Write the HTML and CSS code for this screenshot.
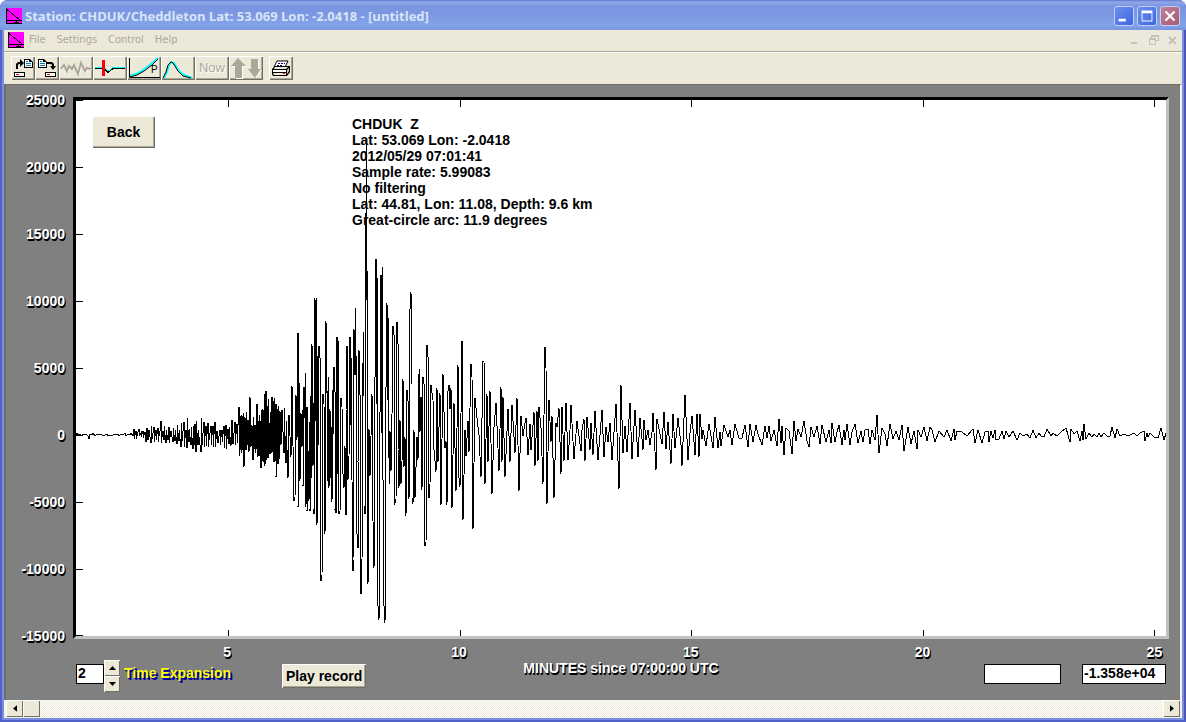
FILE: index.html
```html
<!DOCTYPE html>
<html lang="en">
<head>
    <meta charset="UTF-8">
    <title>Station: CHDUK/Cheddleton</title>
    <link rel="stylesheet" href="styles.css">
</head>
<body>
<!-- app icon, used in title bar and menu bar -->
<svg class="defs" width="0" height="0">
    <symbol id="app" viewBox="0 0 16 16">
        <rect width="16" height="16" fill="#f0f"/>
        <path d="M.5 0V16M1 1.500L14 12M0 12.500H16M10.500 12V16M0 15.500H16M8 14.500H13" fill="none" stroke="#000"/>
    </symbol>
</svg>
<div class="window">
    <header class="title">
        <svg class="app"><use href="#app"/></svg>
        <h1>Station: CHDUK/Cheddleton Lat: 53.069 Lon: -2.0418 - [untitled]</h1>
        <button class="win" aria-label="Minimize"><svg viewBox="0 0 20 20"><path d="M4 13h8v3H4z"/></svg></button>
        <button class="win" aria-label="Maximize"><svg viewBox="0 0 20 20"><path d="M4 4h12v12H4zM5 7v8h10V7z" fill-rule="evenodd"/></svg></button>
        <button class="win close" aria-label="Close"><svg viewBox="0 0 20 20"><path d="M5 5L15 15M15 5L5 15" stroke="#fff" stroke-width="2.400"/></svg></button>
    </header>
    <nav class="menu">
        <svg class="app"><use href="#app"/></svg>
        <a href="#">File</a>
        <a href="#">Settings</a>
        <a href="#">Control</a>
        <a href="#">Help</a>
        <div class="mdi">
            <button aria-label="Minimize document"><svg viewBox="0 0 16 16"><path d="M5 10h6v2H5z"/></svg></button>
            <button aria-label="Restore document"><svg viewBox="0 0 16 16"><path d="M6 3h8v6h-3V8h2V5H7v1H6zM4 6h7v7H4zM5 8v4h5V8z" fill-rule="evenodd"/></svg></button>
            <button aria-label="Close document"><svg viewBox="0 0 16 16"><path d="M5 5L12 12M12 5L5 12" stroke="#c5c2b4" stroke-width="2"/></svg></button>
        </div>
    </nav>
    <div class="toolbar">
        <button aria-label="Open">
            <svg viewBox="0 0 24 24">
                <path d="M13 3h6l3 3v6h-9z"/><path d="M14 4h4v2h3v5h-7z" fill="#fff"/>
                <path d="M15 5.500h2M15 7.500h5M15 9.500h5" stroke="#0080c0"/>
                <path d="M5 13V8l2-2h2V3l4 4-4 4V8H8L7 9v4z"/>
                <path d="M3 16h11v5H3z"/><path d="M4 17h9v3H4z" fill="#fff"/><path d="M5 18h3v1H5z" fill="#f00"/>
            </svg>
        </button>
        <button aria-label="Save">
            <svg viewBox="0 0 24 24">
                <path d="M3 3h6l3 3v6H3z"/><path d="M4 4h4v2h3v5H4z" fill="#fff"/>
                <path d="M5 5.500h2M5 7.500h5M5 9.500h5" stroke="#0080c0"/>
                <path d="M12 6h5l2 2v2h2l-3 4-3-4h2V9l-1-1h-4z"/>
                <path d="M10 16h11v5H10z"/><path d="M11 17h9v3h-9z" fill="#fff"/><path d="M12 18h3v1h-3z" fill="#f00"/>
            </svg>
        </button>
        <button class="wide" aria-label="Wave" disabled>
            <svg viewBox="0 0 34 24" fill="none">
                <path d="M3 14L6 10 9 16 11 11 14 14 16 10 20 19 23 8 27 16 29 13 33 14" stroke="#fff"/>
                <path d="M2 13L5 9 8 15 10 10 13 13 15 9 19 18 22 7 26 15 28 12 32 13" stroke="#aca899" stroke-width="2"/>
            </svg>
        </button>
        <button class="wide" aria-label="Pick arrival">
            <svg viewBox="0 0 34 24" fill="none">
                <path d="M2 11.500H11L15 15.500 20 11.500H32" stroke="#0ff" shape-rendering="crispEdges"/>
                <path d="M2 12.500H11L15 16.500 20 12.500H32" stroke="#000" shape-rendering="crispEdges"/>
                <path d="M9 4h3v16H9z" fill="#f00"/>
            </svg>
        </button>
        <button class="wide" aria-label="Travel times">
            <svg viewBox="0 0 34 24" fill="none">
                <path d="M2 20L9 18 16 14 24 8 31 2" stroke="#0ff" stroke-width="2"/>
                <path d="M2.500 2V21.500H33M3 21L10 19 17 15 25 9 31 3" stroke="#000"/>
                <text x="24" y="17" font-size="10">P</text>
            </svg>
        </button>
        <button class="wide" aria-label="Response curve">
            <svg viewBox="0 0 34 24" fill="none">
                <path d="M3 22L6 16 8 9 10 6 13 7 18 15 23 19 31 22" stroke="#0ff" stroke-width="2"/>
                <path d="M2 22L5 16 7 9 10 6 12 7 17 15 22 20 30 22" stroke="#000"/>
            </svg>
        </button>
        <button class="wide now" disabled>Now</button>
        <button class="wide" aria-label="Amplitude up and down" disabled>
            <svg viewBox="0 0 34 24">
                <path d="M10 3l8 8h-4v12H7V11H3zM23 4h7v10h3l-6 8-7-8h3z" fill="#fff"/>
                <path d="M9 2l8 8h-4v12H6V10H2zM22 3h7v10h3l-6 9-7-9h3z" fill="#aca899"/>
            </svg>
        </button>
        <button class="print" aria-label="Print">
            <svg viewBox="0 0 24 24">
                <path d="M8 5h11l-3 6H5z" fill="#fff" stroke="#000"/>
                <path d="M9 7.500h2M12 7.500h2M15 7.500h1M8 9.500h2M11 9.500h2" stroke="#008"/>
                <path d="M3 13l3-3h15v6l-3 4H4l-1-2z"/>
                <path d="M6 11h13l-2 2H5z" fill="#ece9d8"/><path d="M4 14h13v2H4z" fill="#fff"/>
                <path d="M4 17h13v2H5z" fill="#ece9d8"/><path d="M14 17h2v1h-2z" fill="#f00"/>
                <path d="M18 14l2-2v3l-2 3z" fill="#d4d0c0"/>
            </svg>
        </button>
    </div>

    <main class="client">
        <div class="plot">
            <div class="yaxis">
                <span>25000</span><span>20000</span><span>15000</span><span>10000</span><span>5000</span><span>0</span><span>-5000</span><span>-10000</span><span>-15000</span>
            </div>
            <div class="frame">
                <!-- viewBox is in plot pixels, stretched to the frame -->
                <svg class="trace" viewBox="76 100 1090 536" preserveAspectRatio="none">
                    <path d="M76 100.500h7M76 167.500h7M76 234.500h7M76 301.500h7M76 368.500h7M76 435.500h7M76 502.500h7M76 569.500h7M76 635.500h7"/>
                    <path d="M228.500 100v7M460.500 100v7M691.500 100v7M923.500 100v7M1154.500 100v7M228.500 630v6M460.500 630v6M691.500 630v6M923.500 630v6M1154.500 630v6"/>
                    <polyline points="76,435 77,433 79,436 80,434 82,436 83,434 85,435 86,434 88,436 89,439 90,434 92,435 93,433 95,436 97,434 99,435 101,434 103,436 105,435 107,434 108,436 110,435 112,436 114,434 116,435 118,434 119,436 121,434 123,435 125,433 126,436 128,434 130,435 131,433 133,436
                        134,429 134,439 136,431 136,439 139,429 139,436 141,433 141,437 143,431 143,438 145,432 146,442 147,428 148,440 149,430 151,443 151,426 152,439 154,427 154,442 156,430 156,440 158,428 158,442 160,431 161,421 161,443 163,431 164,440 164,426 166,443 166,430 168,440 169,427 169,443 171,431 173,442 173,428 175,441 175,430 177,444 177,425 179,441 179,430 181,447 181,423 182,441 184,422 184,447 186,430 187,448 187,418 189,442 189,429 191,445 191,427 193,449 193,426 194,445 195,424 196,452 196,421 198,445 198,430 201,452 201,418 202,445 204,422 204,447 206,426 206,446 208,423 208,447
                        211,426 211,445 213,426 213,447 215,422 215,447 217,431 218,443 220,430 220,445 222,430 222,442 224,426 224,448 226,425 226,449 228,429 229,444 229,427 231,446 232,420 233,444 235,422 235,445 237,424 237,443 239,407 239,456 240,420 240,450 241,416 241,453 242,415 243,450 243,413 244,467 245,417 246,450 246,412 247,446 248,420 248,446 249,452 250,397 251,447 252,425 253,460 253,417 254,450 255,425 255,453 256,450 257,404 257,457 258,420 259,456 259,415 260,420 261,468 261,410 262,462 263,409 264,462 264,394 265,466 266,391 266,460 267,405 268,458 268,399 269,423 270,454 270,412 271,454 272,397 272,452 273,400 274,462 274,398 275,462 276,404 276,477 277,408 278,464 278,406 279,460 280,411 281,445 282,410 284,453 284,408 286,463 286,421 288,478 289,415 291,457 292,386 293,446 294,501 295,498 296,395 297,440 298,333 298,507 299,381 300,481 301,413 302,447 303,410 303,486 304,387 305,418 305,373 306,507 307,407 307,511 308,450 309,501 310,422 310,511 311,396 311,478 312,344 313,466 314,403 314,514 315,298 316,421 316,298 317,525 318,356 318,445 319,346 320,358 320,445 321,581 322,577 323,394 324,404 325,534 326,321 327,393 327,391 328,481 328,377 329,488 330,409 331,478 331,427 332,502 333,390 333,434 334,367 335,392 335,510 336,393 336,513 337,337 338,474 338,341 339,513 340,513 341,398 342,407 343,474 344,488 345,446 346,515 346,410 347,346 348,480 349,457 350,337 350,425 351,356 352,480 353,571 353,560 354,329 355,375 355,308 356,375 356,356 357,534 358,548 358,462 359,350 360,395 360,536 361,594 362,562 363,363 363,332 364,396 364,506 365,514 365,213 366,300 366,138 366,271 367,271 367,561 368,584 369,429 370,476 371,436 372,394 373,521 374,568 375,378 376,259 377,404 377,278 378,606 379,620 380,414 381,275 382,433 382,267 383,480 384,606 385,623 386,388 387,303 388,400 388,318 389,458 389,484 390,431 391,471 392,415 393,326 394,335 394,505 396,501 397,322 398,344 398,449 399,488 400,420 401,484 402,462 403,379 404,467 405,437 406,516 407,390 408,401 408,483 409,499 410,309 411,292 412,384 412,498 413,504 414,430 415,498 417,437 418,460 419,374 419,368 420,432 421,397 421,477 422,490 423,377 424,384 424,484 425,545 426,545 427,345 428,357 428,434 429,498 430,485 431,385 433,400 434,450 436,472 437,388 438,462 440,393 441,505 443,374 445,448 446,441 447,505 448,391 449,385 450,409 451,388 452,508 454,403 456,491 458,365 459,478 460,487 462,341 463,520 465,430 466,456 468,421 469,452 471,364 472,377 473,529 475,398 477,418 479,435 481,477 483,361 484,361 485,484 487,394 488,462 490,391 492,494 494,427 496,403 499,471 501,387
                        502,462 503,397 505,477 508,409 510,462 512,405 515,453 517,398 519,491 521,416 523,436 525,423 526,418 528,455 530,424 531,450 533,425 534,412 535,466 537,411 538,461 539,407 541,428 543,484 545,347 546,368 547,504 549,400 551,442 552,416 554,498 556,423 557,427 559,408 561,474 562,407 564,461 566,403 568,460 570,430 571,405 574,459 577,421 581,451 582,430 584,419 585,461 587,417 590,450 591,423 593,455 595,411 598,460 602,410 604,457 606,427 608,442 610,423 612,460 616,404 619,489 621,385 623,453 625,426 627,452 630,403 632,459 635,410 638,457 640,418 643,450 644,420 646,440 648,430 650,445 652,432 653,413 656,470 657,419 662,444 664,412 666,449 668,422 671,464 673,414 675,448 678,418 681,445 682,466 685,395 688,460 690,433 692,416 695,455 697,414 699,457 700,414
                        702,439 703,430 706,446 709,424 713,448 715,417 718,448 720,432 721,446 724,425 728,437 730,430 732,445 735,424 739,438 742,438 745,425 748,447 750,424 753,442 756,425 758,434 762,445 765,426 767,438 769,426 771,441 774,430 777,446 779,419 781,443 782,426 784,455 786,428 789,431 792,454 794,421 796,441 798,429 801,437 804,421 807,441 809,447 811,427 814,437 817,426 820,444 822,425 826,442 829,430 831,443 832,423 835,442 837,432 839,425 842,445 844,430 845,440 847,424 850,445 852,432 855,424 858,443 861,431 863,442 865,430 868,429 870,444 872,430 875,440 877,415 879,453 882,428 885,434 887,446 890,424 893,439 896,431 899,440 902,425 904,451 908,427 911,444 914,431 917,449 918,430 921,437
                        924,427 927,441 930,427 932,430 935,442 939,431 944,437 947,430 951,441 954,429 955,440 957,431 962,432 967,436 973,429 975,443 978,430 982,443 985,432 988,431 989,442 991,431 993,438 995,430 996,440 999,439 1002,431 1004,439 1006,431 1009,437 1013,431 1017,440 1020,433 1023,436 1027,434 1030,438 1033,430 1036,438 1039,433 1041,436 1044,437 1047,429 1051,436 1053,433 1057,436 1061,432 1066,428 1070,442 1071,429 1074,434 1077,431 1080,441 1082,431 1083,440 1084,424 1086,439 1089,433 1092,437 1094,434 1097,437 1099,433 1101,437 1104,433 1107,436 1110,436 1112,427 1115,438 1117,429 1120,436 1124,434 1128,436 1134,433 1137,436 1140,433 1144,431 1145,441 1147,433 1148,437 1150,433 1154,437 1158,438 1161,428 1164,440 1166,433"/>
                </svg>
                <button class="btn back">Back</button>
                <div class="info">
                    <p>CHDUK&nbsp; Z</p>
                    <p>Lat: 53.069 Lon: -2.0418</p>
                    <p>2012/05/29 07:01:41</p>
                    <p>Sample rate: 5.99083</p>
                    <p>No filtering</p>
                    <p>Lat: 44.81, Lon: 11.08, Depth: 9.6 km</p>
                    <p>Great-circle arc: 11.9 degrees</p>
                </div>
            </div>
        </div>
        <div class="xaxis"><span>5</span><span>10</span><span>15</span><span>20</span><span>25</span></div>
        <div class="controls">
            <div class="left">
                <input type="text" id="expansion" class="expansion" value="2">
                <div class="spin">
                    <button aria-label="Increase"><svg viewBox="0 0 9 5"><path d="M0 5L4.500 0 9 5z"/></svg></button>
                    <button aria-label="Decrease"><svg viewBox="0 0 9 5"><path d="M0 0L4.500 5 9 0z"/></svg></button>
                </div>
                <label for="expansion">Time Expansion</label>
                <button class="btn play">Play record</button>
            </div>
            <div class="caption">MINUTES since 07:00:00 UTC</div>
            <div class="right">
                <input type="text" class="time" aria-label="Cursor time" readonly>
                <input type="text" class="value" aria-label="Cursor value" value="-1.358e+04" readonly>
            </div>
        </div>
    </main>
    <div class="scroll">
        <button aria-label="Scroll left"><svg viewBox="0 0 5 8"><path d="M5 0v8L0 4z"/></svg></button>
        <button aria-label="Scroll thumb"></button>
        <button class="end" aria-label="Scroll right"><svg viewBox="0 0 5 8"><path d="M0 0v8L5 4z"/></svg></button>
    </div>
</div>
</body>
</html>
```
FILE: styles.css
```css
* {
    box-sizing: border-box;
    margin: 0;
    padding: 0;
}
body {
    background: #fff;
    font: bold 14px/16px "Liberation Sans", Arial, sans-serif;
    color: #000;
}
button {
    font: inherit;
    color: inherit;
    border: 0;
    background: #ece9d8;
}
svg {
    display: block;
}
.defs {
    position: absolute;
}
.window {
    display: flex;
    flex-direction: column;
    height: 100vh;
    padding: 0 4px 4px;
    background: #7a8ee0;
    border-radius: 8px 8px 0 0;
    box-shadow: inset 2px -2px #5362cb, inset -2px 0 #4c56b8;
    overflow: hidden;
}
.app {
    width: 16px;
    height: 16px;
    shape-rendering: crispEdges;
}

/* title bar */
.title {
    display: flex;
    align-items: center;
    gap: 3px;
    height: 30px;
    margin: 0 -4px;
    padding: 2px 6px 0;
    background: linear-gradient(#6275d0 0, #8fa8ea 2px, #7b95e0 6px, #7c98e2 15px, #82a4e9 25px, #7a93df 30px);
}
.title h1 {
    flex: 1;
    font: bold 13px/18px "Open Sans", "DejaVu Sans", sans-serif;
    color: #d8e4f8;
    white-space: nowrap;
}
.win {
    width: 20px;
    height: 20px;
    border: 1px solid #c3d0f4;
    border-radius: 3px;
    background: linear-gradient(135deg, #6e8ff0, #3c66e0);
}
.win svg {
    width: 18px;
    height: 18px;
    fill: #fff;
}
.close {
    background: linear-gradient(135deg, #c08099, #a85a70);
}

/* menu */
.menu {
    display: flex;
    align-items: center;
    height: 21px;
    padding: 0 1px 2px 4px;
    background: #ece9d8;
}
.menu a {
    margin-left: 11px;
    font: 11px/16px "DejaVu Sans Condensed", "Liberation Sans", sans-serif;
    color: #aca899;
    text-decoration: none;
}
.menu .app + a {
    margin-left: 5px;
}
.mdi {
    display: flex;
    gap: 2px;
    margin-left: auto;
}
.mdi button {
    width: 17px;
    height: 17px;
    background: #ebe9dc;
}
.mdi svg {
    width: 16px;
    height: 16px;
    fill: #c5c2b4;
}

/* toolbar */
.toolbar {
    display: flex;
    height: 33px;
    padding: 4px 7px;
    background: #ece9d8;
    border-top: 1px solid #aca899;
    box-shadow: inset 0 1px #fff;
}
.toolbar button {
    width: 24px;
    height: 24px;
    box-shadow: inset 1px 1px #fff, inset -1px -1px #716f64, inset -2px -2px #aca899;
}
.toolbar svg {
    width: 100%;
    height: 24px;
}
.toolbar .wide {
    width: 34px;
}
.toolbar text {
    fill: #000;
    font-weight: normal;
}
.toolbar .now {
    font: 13px/24px "Liberation Sans", sans-serif;
    color: #aca899;
    text-shadow: 1px 1px #fff;
}
.toolbar .print {
    margin-left: 6px;
}

/* client area */
.client {
    display: flex;
    flex: 1;
    flex-direction: column;
    min-height: 0;
    padding: 12px 11px 0 0;
    background: #808080;
    border-top: 1px solid #716f64;
    border-left: 2px solid #716f64;
    border-right: 2px solid #f5f3ea;
}
.plot {
    display: flex;
    flex: 1;
    min-height: 0;
}
.yaxis {
    display: flex;
    flex-direction: column;
    justify-content: space-between;
    width: 67px;
    padding: 3px 8px 3px 0;
    text-align: right;
}
.yaxis span {
    height: 0;
    line-height: 0;
}
.yaxis,
.xaxis,
.caption {
    color: #fff;
    text-shadow: 1px 1px #000, 1px 2px #000;
}
.frame {
    position: relative;
    flex: 1;
    background: #fff;
    border: 3px solid #000;
    border-right-color: #c0c0c0;
    border-bottom-color: #c0c0c0;
}
.trace {
    position: absolute;
    width: 100%;
    height: 100%;
    fill: none;
    stroke: #000;
    shape-rendering: crispEdges;
}
.trace * {
    vector-effect: non-scaling-stroke;
}
.btn {
    box-shadow: inset 1px 1px #fff, inset -1px -1px #716f64, inset -2px -2px #aca899;
}
.back {
    position: absolute;
    left: 16px;
    top: 16px;
    width: 63px;
    height: 32px;
}
.info {
    position: absolute;
    left: 276px;
    top: 16px;
    white-space: nowrap;
}
.xaxis {
    display: flex;
    justify-content: space-between;
    height: 21px;
    margin: 0 3px 0 70px;
    padding: 5px 1% 0 13%;
}
.xaxis span {
    display: flex;
    justify-content: center;
    width: 0;
}
.controls {
    display: grid;
    grid-template-columns: 1fr auto 1fr;
    height: 40px;
    margin: 0 3px 0 70px;
    white-space: nowrap;
}
.left,
.right {
    display: flex;
    align-items: flex-start;
}
.right {
    gap: 21px;
    justify-content: flex-end;
}
.controls input {
    height: 20px;
    margin-top: 4px;
    padding: 0 1px 2px;
    font: inherit;
    border: 1px solid #000;
    border-radius: 0;
    background: #fff;
}
.controls .expansion {
    width: 28px;
}
.controls .time {
    width: 77px;
}
.controls .value {
    width: 84px;
}
.spin {
    display: flex;
    flex-direction: column;
    width: 16px;
}
.spin button {
    display: flex;
    align-items: center;
    justify-content: center;
    height: 16px;
    box-shadow: inset 1px 1px #fff, inset -1px -1px #716f64;
}
.spin svg {
    width: 7px;
    height: 4px;
}
.left label {
    margin: 5px 0 0 4px;
    color: #ff0;
    text-shadow: 1px 1px #0000a0, 2px 2px #0000a0;
}
.play {
    width: 84px;
    height: 24px;
    margin: 4px 0 0 51px;
}
.caption {
    line-height: 16px;
}

/* bottom scroll bar */
.scroll {
    display: flex;
    height: 18px;
    padding-left: 2px;
    border-right: 2px solid #f5f3ea;
    border-bottom: 1px solid #f5f3ea;
    background: repeating-conic-gradient(#fff 0 25%, #ece9d8 0 50%) 0 0 / 2px 2px;
}
.scroll button {
    display: flex;
    align-items: center;
    justify-content: center;
    width: 17px;
    height: 17px;
    box-shadow: inset 1px 1px #fff, inset -1px -1px #716f64;
}
.scroll svg {
    width: 4px;
    height: 7px;
}
.scroll .end {
    margin-left: auto;
}
```
